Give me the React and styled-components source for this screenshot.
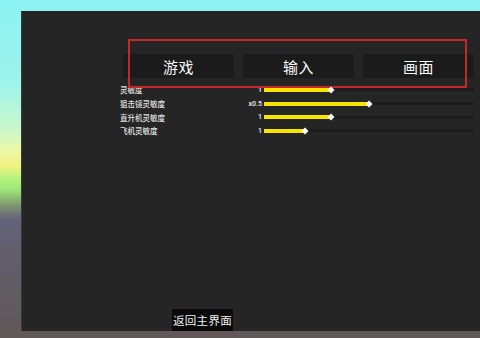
import React from "react";
import styled, { createGlobalStyle } from "styled-components";

const GlobalStyle = createGlobalStyle`
  html, body {
    margin: 0;
    padding: 0;
    width: 480px;
    height: 338px;
    overflow: hidden;
  }
  body {
    font-family: "Noto Sans CJK SC", "Noto Sans", sans-serif;
    background: linear-gradient(
      to bottom,
      #8cf2f2 0%,
      #9ef4ea 25%,
      #c8f8cc 38%,
      #eef8a4 45%,
      #f2f282 49%,
      #b4f27c 53%,
      #9ce878 56%,
      #7e9270 61%,
      #64627a 65%,
      #625e6c 75%,
      #605858 100%
    );
  }
`;

const Page = styled.div`
  width: 480px;
  height: 338px;
  box-sizing: border-box;
  padding: 11px 0 7px 22px;
`;

const Panel = styled.div`
  height: 100%;
  background: #252525;
  box-shadow: -1px 0 0 #3a3a3a;
  display: flex;
  flex-direction: column;
`;

const Content = styled.div`
  margin-left: 98px;
  padding-top: 43px;
  width: 356px;
  display: flex;
  flex-direction: column;
`;

const TabBar = styled.div`
  position: relative;
  display: flex;
  gap: 9px;
  padding-left: 3px;
`;

const Tab = styled.div`
  width: 111px;
  height: 24px;
  background: #1b1b1b;
  color: #fafafa;
  font-size: 15px;
  display: flex;
  align-items: center;
  justify-content: center;
  letter-spacing: 0.5px;
`;

const Highlight = styled.div`
  position: absolute;
  left: 8px;
  top: -15px;
  width: 335px;
  height: 45px;
  border: 2px solid #c4282a;
  pointer-events: none;
`;

const Rows = styled.div`
  margin-top: 5px;
  display: flex;
  flex-direction: column;
`;

const Row = styled.div`
  display: grid;
  grid-template-columns: 100px 44px 210px;
  align-items: center;
  height: 13.7px;
`;

const Label = styled.div`
  color: #e0e0e0;
  font-size: 7.5px;
  font-weight: 500;
  white-space: nowrap;
`;

const Value = styled.div`
  color: #f0f0f0;
  font-size: 7px;
  font-weight: 500;
  text-align: right;
  padding-right: 2px;
  font-family: "Roboto", "Liberation Sans", sans-serif;
`;

const Track = styled.div`
  position: relative;
  height: 3px;
  width: 210px;
  background: #1b1b1b;
`;

const Fill = styled.div`
  position: absolute;
  left: 0;
  top: -0.5px;
  height: 4px;
  background: #f6e400;
`;

const Thumb = styled.div`
  position: absolute;
  top: 50%;
  width: 5px;
  height: 5px;
  background: #ffffff;
  transform: translate(-50%, -50%) rotate(45deg);
`;

const Spacer = styled.div`
  flex: 1;
`;

const BackButton = styled.div`
  margin-left: 150px;
  width: 61px;
  height: 22px;
  background: #0a0a0a;
  color: #f0f0f0;
  font-size: 11.5px;
  display: flex;
  align-items: center;
  justify-content: center;
  letter-spacing: 0.3px;
`;

const tabs = ["游戏", "输入", "画面"];

const sliders = [
  { label: "灵敏度", value: "1", pct: 0.32 },
  { label: "狙击镜灵敏度", value: "x0.5", pct: 0.5 },
  { label: "直升机灵敏度", value: "1", pct: 0.32 },
  { label: "飞机灵敏度", value: "1", pct: 0.195 },
];

export default function App() {
  return (
    <>
      <GlobalStyle />
      <Page>
        <Panel>
          <Content>
            <TabBar>
              {tabs.map((t) => (
                <Tab key={t}>{t}</Tab>
              ))}
              <Highlight />
            </TabBar>
            <Rows>
              {sliders.map((s) => (
                <Row key={s.label}>
                  <Label>{s.label}</Label>
                  <Value>{s.value}</Value>
                  <Track>
                    <Fill style={{ width: `${s.pct * 100}%` }} />
                    <Thumb style={{ left: `${s.pct * 100}%` }} />
                  </Track>
                </Row>
              ))}
            </Rows>
          </Content>
          <Spacer />
          <BackButton>返回主界面</BackButton>
        </Panel>
      </Page>
    </>
  );
}
